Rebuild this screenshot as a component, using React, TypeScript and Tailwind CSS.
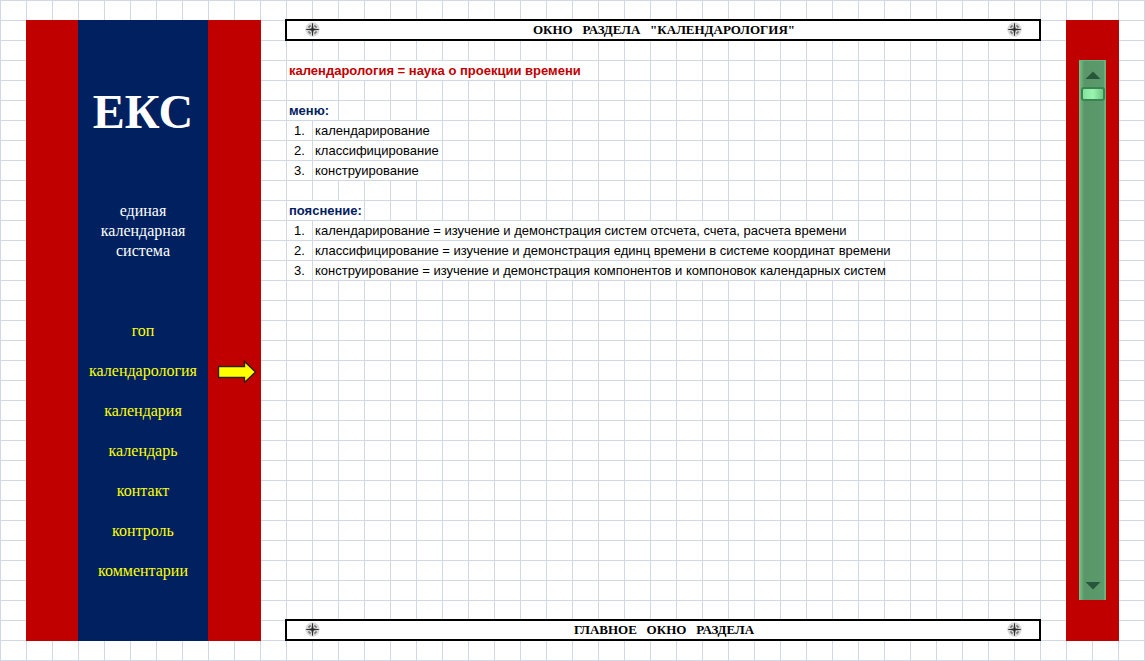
import { useState } from "react";

const about = ["единая", "календарная", "система"];

const sections = [
  "гоп",
  "календарология",
  "календария",
  "календарь",
  "контакт",
  "контроль",
  "комментарии",
];

const menu = ["календарирование", "классифицирование", "конструирование"];

const notes = [
  {
    text: "календарирование = изучение и демонстрация систем отсчета, счета, расчета времени",
    span: "w-[545px]",
  },
  {
    text: "классифицирование = изучение и демонстрация единц времени в системе координат времени",
    span: "w-[597px]",
  },
  {
    text: "конструирование = изучение и демонстрация компонентов и компоновок календарных систем",
    span: "w-[571px]",
  },
];

function Compass() {
  return (
    <svg viewBox="0 0 16 16" className="size-4" aria-hidden="true">
      <circle cx="7.5" cy="7.5" r="7.2" fill="#d9d9d9" />
      <path
        d="M4 6V4h2M9 4h2v2M4 9v2h2M9 11h2V9"
        fill="none"
        stroke="#555"
        strokeWidth="1"
      />
      <path d="M5.2 5.2l4.6 4.6M9.8 5.2L5.2 9.8" stroke="#f4f4f4" strokeWidth="0.8" />
      <path d="M7.5 .4l1 6.1 6.1 1-6.1 1-1 6.1-1-6.1-6.1-1 6.1-1z" fill="#1c1c1c" />
      <path d="M7 1.5h1v12H7zM1.5 7h12v1h-12z" fill="#2a2a2a" />
    </svg>
  );
}

function Banner({ children }: { children: string }) {
  return (
    <div className="flex h-[22px] items-center justify-between border-2 border-black bg-white pr-4 pl-[18px]">
      <Compass />
      <h2 className="whitespace-pre font-['Liberation_Serif',serif] text-[13px] leading-[18px] font-bold">
        {children}
      </h2>
      <Compass />
    </div>
  );
}

function Arrow() {
  return (
    <svg
      viewBox="0 0 40 24"
      className="absolute top-1/2 left-full ml-[9px] h-6 w-10 -translate-y-1/2"
      aria-hidden="true"
    >
      <path
        d="M1.5 7.5h26v-5L38.5 13 27.5 23.5v-5h-26z"
        fill="#ff0"
        stroke="#33200a"
        strokeWidth="1.4"
      />
    </svg>
  );
}

function Sidebar() {
  return (
    <aside className="mt-px flex w-[235px] shrink-0 bg-[#c00000] pr-[53px] pl-[52px] text-center font-['Liberation_Serif',serif] text-[16px] leading-5">
      <div className="flex-1 bg-[#002060] pt-[61px] pb-[60px]">
        <h1 className="h-[120px] text-[48px] leading-[62px] font-bold text-white">ЕКС</h1>
        <p className="text-white">
          {about.map((line) => (
            <span key={line} className="block">
              {line}
            </span>
          ))}
        </p>
        <nav className="mt-[60px] flex flex-col gap-5 text-[#ffff00]">
          {sections.map((name) => (
            <a key={name} href={`#${name}`} className="relative block">
              {name}
              {name === "календарология" && <Arrow />}
            </a>
          ))}
        </nav>
      </div>
    </aside>
  );
}

function Scroller() {
  const [position, setPosition] = useState(0);
  return (
    <aside className="mt-px flex w-[53px] shrink-0 flex-col bg-[#c00000] pt-10 pr-[13px] pb-[41px] pl-[13px]">
      <div className="flex flex-1 flex-col items-center bg-linear-to-r from-[#73c58c] via-[#599668] via-20% to-[#5c9b6d] shadow-[inset_-2px_0_0_#64b57d,inset_0_1px_0_#64b57d]">
        <button
          type="button"
          aria-label="Вверх"
          onClick={() => setPosition(Math.max(0, position - 10))}
          className="flex h-[27px] items-center pt-0.5"
        >
          <svg viewBox="0 0 16 8" className="h-2 w-4">
            <path d="M.5 8L8 .5 15.5 8z" fill="#28563a" />
          </svg>
        </button>
        <input
          type="range"
          aria-label="Прокрутка"
          min={0}
          max={100}
          value={position}
          onChange={(e) => setPosition(Number(e.target.value))}
          className="w-6 flex-1 appearance-none bg-transparent [writing-mode:vertical-lr] [&::-webkit-slider-thumb]:h-3.5 [&::-webkit-slider-thumb]:w-6 [&::-webkit-slider-thumb]:appearance-none [&::-webkit-slider-thumb]:rounded-[3px] [&::-webkit-slider-thumb]:border-2 [&::-webkit-slider-thumb]:border-[#3a8453] [&::-webkit-slider-thumb]:bg-linear-to-r [&::-webkit-slider-thumb]:from-[#84e29c] [&::-webkit-slider-thumb]:via-[#9bf5b0] [&::-webkit-slider-thumb]:to-[#6cc884]"
        />
        <button
          type="button"
          aria-label="Вниз"
          onClick={() => setPosition(Math.min(100, position + 10))}
          className="flex h-[27px] items-center pb-0.5"
        >
          <svg viewBox="0 0 16 8" className="h-2 w-4">
            <path d="M.5 0L8 7.5 15.5 0z" fill="#28563a" />
          </svg>
        </button>
      </div>
    </aside>
  );
}

export default function App() {
  return (
    <div className="flex min-h-screen bg-white bg-[linear-gradient(to_right,#d0d7e5_1px,transparent_1px),linear-gradient(to_bottom,#d0d7e5_1px,transparent_1px)] bg-[size:26px_20px] px-[26px] pt-[19px] pb-5 font-['Liberation_Sans',Arial,sans-serif] text-[13px] leading-[19px] text-black">
      <Sidebar />
      <main className="mr-[25px] ml-6 flex min-w-0 flex-1 flex-col">
        <Banner>{'ОКНО   РАЗДЕЛА   "КАЛЕНДАРОЛОГИЯ"'}</Banner>
        <div className="flex flex-1 flex-col gap-px pt-5 pl-0.5 whitespace-nowrap">
          <p className="w-[311px] bg-white pl-0.5 font-bold text-[#c00000]">
            календарология = наука о проекции времени
          </p>
          <h3 className="mt-5 w-[51px] bg-white pl-0.5 font-bold text-[#002060]">меню:</h3>
          <ol className="flex flex-col gap-px">
            {menu.map((item, i) => (
              <li key={item} className="flex gap-px">
                <span className="w-[25px] text-center">{i + 1}.</span>
                <a href={`#${item}`} className="w-[129px] bg-white pl-0.5">
                  {item}
                </a>
              </li>
            ))}
          </ol>
          <h3 className="mt-5 w-[77px] bg-white pl-0.5 font-bold text-[#002060]">пояснение:</h3>
          <ol className="flex flex-col gap-px">
            {notes.map((note, i) => (
              <li key={note.text} className="flex gap-px">
                <span className="w-[25px] text-center">{i + 1}.</span>
                <span className={`bg-white pl-0.5 ${note.span}`}>{note.text}</span>
              </li>
            ))}
          </ol>
        </div>
        <Banner>{"ГЛАВНОЕ   ОКНО   РАЗДЕЛА"}</Banner>
      </main>
      <Scroller />
    </div>
  );
}
